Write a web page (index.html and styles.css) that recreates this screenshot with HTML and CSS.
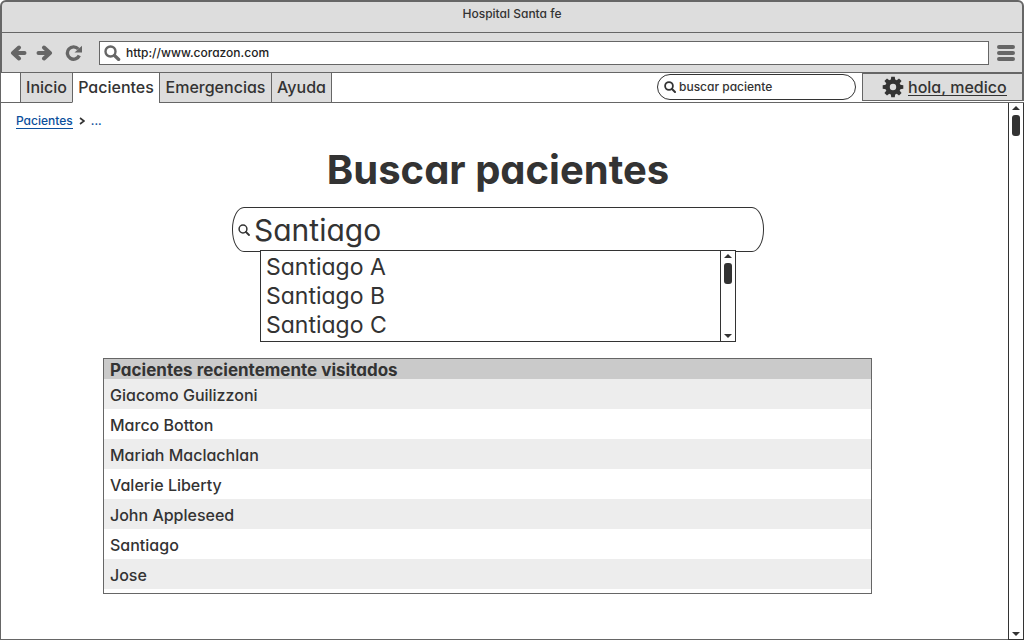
FILE: index.html
```html
<!DOCTYPE html>
<html lang="es">
<head>
<meta charset="utf-8">
<meta name="viewport" content="width=device-width, initial-scale=1">
<title>Hospital Santa fe</title>
<link rel="stylesheet" href="styles.css">
</head>
<body>
<div class="window">
  <header class="chrome">
    <div class="titlebar">Hospital Santa fe</div>
    <div class="toolbar">
      <div class="history">
        <button class="icon-button" type="button" aria-label="Atrás">
          <svg width="18" height="16" viewBox="0 0 18 16"><path d="M9 2.500 3 8l6 5.500M3.500 8H14.500" fill="none" stroke="currentColor" stroke-width="4" stroke-linecap="round" stroke-linejoin="round"/></svg>
        </button>
        <button class="icon-button" type="button" aria-label="Adelante">
          <svg width="18" height="16" viewBox="0 0 18 16"><path d="M9 2.500 15 8l-6 5.500M14.500 8H3.500" fill="none" stroke="currentColor" stroke-width="4" stroke-linecap="round" stroke-linejoin="round"/></svg>
        </button>
        <button class="icon-button reload" type="button" aria-label="Recargar">
          <svg width="18" height="16" viewBox="0 0 18 16"><path d="M13.300 4A6.200 6.200 0 1 0 14.300 10.500" fill="none" stroke="currentColor" stroke-width="3.400"/><path d="M17 .8V7.500H9.500z" fill="currentColor"/></svg>
        </button>
      </div>
      <label class="address">
        <svg width="18" height="16" viewBox="0 0 18 16"><circle cx="6.500" cy="6.500" r="5" fill="none" stroke="currentColor" stroke-width="2.400"/><path d="m10.500 10.500 4.200 4" stroke="currentColor" stroke-width="3.200" stroke-linecap="round"/></svg>
        <input type="text" value="http://www.corazon.com" aria-label="Dirección">
      </label>
      <button class="icon-button" type="button" aria-label="Menú">
        <svg width="18" height="16" viewBox="0 0 18 16"><path d="M2 2h14M2 8h14M2 14h14" stroke="currentColor" stroke-width="4" stroke-linecap="round"/></svg>
      </button>
    </div>
  </header>

  <div class="navbar">
    <nav class="tabs">
      <a class="tab" href="#inicio">Inicio</a>
      <a class="tab tab-active" href="#pacientes" aria-current="page">Pacientes</a>
      <a class="tab" href="#emergencias">Emergencias</a>
      <a class="tab" href="#ayuda">Ayuda</a>
    </nav>
    <label class="quick-search">
      <svg width="12" height="12" viewBox="0 0 12 12"><circle cx="5" cy="5" r="3.900" fill="none" stroke="currentColor" stroke-width="1.800"/><path d="m8 8 3 3" stroke="currentColor" stroke-width="2" stroke-linecap="round"/></svg>
      <input type="text" value="buscar paciente" aria-label="Buscar paciente">
    </label>
    <div class="account">
      <svg width="22" height="22" viewBox="-11 -11 22 22"><g fill="currentColor"><path fill-rule="evenodd" d="M0-7.700A7.700 7.700 0 1 0 0 7.700 7.700 7.700 0 1 0 0-7.700M0-3.200A3.200 3.200 0 1 1 0 3.200 3.200 3.200 0 1 1 0-3.200"/><path id="tooth" d="M-2.200-7-1.800-10.300H1.800L2.200-7z"/><use href="#tooth" transform="rotate(45)"/><use href="#tooth" transform="rotate(90)"/><use href="#tooth" transform="rotate(135)"/><use href="#tooth" transform="rotate(180)"/><use href="#tooth" transform="rotate(225)"/><use href="#tooth" transform="rotate(270)"/><use href="#tooth" transform="rotate(315)"/></g></svg>
      <a href="#cuenta">hola, medico</a>
    </div>
  </div>

  <div class="viewport">
    <main class="page">
      <nav class="breadcrumb" aria-label="Ruta">
        <a href="#pacientes">Pacientes</a>
        <svg width="6" height="8" viewBox="0 0 6 8"><path d="m1 1 4 3-4 3" fill="none" stroke="currentColor" stroke-width="1.600"/></svg>
        <span class="crumb-rest">...</span>
      </nav>
      <div class="content">
        <h1>Buscar pacientes</h1>
        <div class="finder">
          <label class="finder-box">
            <svg width="12" height="12" viewBox="0 0 12 12"><circle cx="5" cy="5" r="3.900" fill="none" stroke="currentColor" stroke-width="1.500"/><path d="m8 8 3 3" stroke="currentColor" stroke-width="1.800" stroke-linecap="round"/></svg>
            <input type="text" value="Santiago" aria-label="Nombre del paciente">
          </label>
          <div class="suggestions">
            <ul>
              <li><button type="button">Santiago A</button></li>
              <li><button type="button">Santiago B</button></li>
              <li><button type="button">Santiago C</button></li>
            </ul>
            <div class="scrollbar">
              <button class="arrow" type="button" aria-label="Subir lista"><svg width="8" height="4" viewBox="0 0 8 4"><path d="M0 4 4 0l4 4z" fill="currentColor"/></svg></button>
              <div class="thumb"></div>
              <button class="arrow arrow-down" type="button" aria-label="Bajar lista"><svg width="8" height="4" viewBox="0 0 8 4"><path d="M0 0h8L4 4z" fill="currentColor"/></svg></button>
            </div>
          </div>
        </div>
        <table class="recent">
          <thead><tr><th scope="col">Pacientes recientemente visitados</th></tr></thead>
          <tbody>
            <tr><td>Giacomo Guilizzoni</td></tr>
            <tr><td>Marco Botton</td></tr>
            <tr><td>Mariah Maclachlan</td></tr>
            <tr><td>Valerie Liberty</td></tr>
            <tr><td>John Appleseed</td></tr>
            <tr><td>Santiago</td></tr>
            <tr><td>Jose</td></tr>
          </tbody>
        </table>
      </div>
    </main>
    <div class="scrollbar">
      <button class="arrow" type="button" aria-label="Subir"><svg width="8" height="4" viewBox="0 0 8 4"><path d="M0 4 4 0l4 4z" fill="currentColor"/></svg></button>
      <div class="thumb"></div>
      <button class="arrow arrow-down" type="button" aria-label="Bajar"><svg width="8" height="4" viewBox="0 0 8 4"><path d="M0 0h8L4 4z" fill="currentColor"/></svg></button>
    </div>
  </div>
</div>
</body>
</html>
```
FILE: styles.css
```css
:root {
  --ink: #333;
  --line: #666;
  --panel: #ddd;
  --link: #0b4f9c;
}

* { box-sizing: border-box; }

body {
  margin: 0;
  background: #fff;
  color: var(--ink);
  font: 500 16px/20px Inter, "Noto Sans", sans-serif;
  font-feature-settings: "cv11";
}

button, input {
  margin: 0;
  padding: 0;
  border: 0;
  background: none;
  color: inherit;
  font: inherit;
  font-feature-settings: inherit;
  outline: 0;
}

button { cursor: pointer; }
input { flex: 1; min-width: 0; }
svg { display: block; flex: none; }

.window {
  display: flex;
  flex-direction: column;
  min-height: 100vh;
}

.chrome {
  border: 2px solid var(--line);
  border-bottom-width: 1px;
  border-radius: 6px 6px 0 0;
  background: var(--panel);
}

.titlebar {
  height: 31px;
  padding-top: 2px;
  border-bottom: 1px solid var(--line);
  font-size: 12px;
  text-align: center;
}

.toolbar {
  display: flex;
  align-items: center;
  gap: 8px;
  height: 39px;
  padding: 0 7px 0 8px;
}

.icon-button { color: var(--line); }

.history {
  display: flex;
  gap: 7px;
  margin-right: 8px;
}

.reload { margin-left: 5px; }

.address {
  flex: 1;
  display: flex;
  align-items: center;
  gap: 4px;
  height: 24px;
  padding: 0 4px;
  border: 1px solid var(--line);
  background: #fff;
  color: var(--line);
}

.address input {
  color: #222;
  font-size: 12px;
}

.navbar {
  display: flex;
  height: 30px;
  padding-left: 19px;
  border-left: 1px solid var(--line);
  box-shadow: inset 0 -1px var(--line);
}

.tabs {
  display: grid;
  grid-template-columns: 52px 87px 112px 61px;
  margin-right: auto;
}

.tab {
  border: solid var(--line);
  border-width: 0 0 1px 1px;
  background: var(--panel);
  color: inherit;
  font-size: 16px;
  line-height: 29px;
  text-align: center;
  text-decoration: none;
}

.tab:last-child { border-right-width: 1px; }

.tab-active {
  border-bottom-color: #fff;
  background: #fff;
}

.quick-search {
  display: flex;
  align-items: center;
  gap: 3px;
  width: 199px;
  height: 26px;
  margin: 1px 6px 0 0;
  padding: 0 6px;
  border: 1px solid var(--ink);
  border-radius: 13px;
  background: #fff;
}

.quick-search input { font-size: 12px; }

.account {
  display: flex;
  align-items: center;
  gap: 4px;
  width: 162px;
  height: 28px;
  padding-left: 19px;
  border: solid var(--line);
  border-width: 1px 2px 1px 1px;
  background: var(--panel);
}

.account a {
  border-bottom: 1px solid var(--ink);
  color: inherit;
  font-size: 16px;
  line-height: 16px;
  text-decoration: none;
}

.viewport {
  flex: 1;
  display: flex;
}

.page {
  flex: 1;
  border: solid var(--line);
  border-width: 0 0 1px 1px;
}

.breadcrumb {
  display: flex;
  align-items: center;
  gap: 6px;
  padding: 8px 0 0 15px;
  font-size: 12px;
}

.breadcrumb a {
  border-bottom: 1px solid var(--link);
  color: var(--link);
  line-height: 15px;
  text-decoration: none;
}

.crumb-rest { color: var(--link); }

.content { padding: 15px 115px 0 102px; }

h1 {
  margin: 0;
  font-size: 40px;
  font-weight: 700;
  line-height: 48px;
  text-align: center;
}

.finder {
  position: relative;
  width: 100%;
  max-width: 532px;
  margin: 13px auto 0;
}

.finder-box {
  display: flex;
  align-items: center;
  gap: 4px;
  height: 45px;
  padding: 0 5px;
  border: 1px solid var(--ink);
  border-radius: 12px / 22px;
}

.finder-box input {
  font-size: 30px;
  font-weight: 400;
  line-height: 40px;
}

.suggestions {
  position: absolute;
  top: 43px;
  left: 28px;
  right: 28px;
  display: flex;
  border: 1px solid var(--ink);
  background: #fff;
}

.suggestions ul {
  flex: 1;
  margin: 0;
  padding: 2px 0 1px 5px;
  list-style: none;
}

.suggestions li button {
  display: block;
  font-size: 23px;
  font-weight: 400;
  line-height: 29px;
}

.scrollbar {
  display: flex;
  flex-direction: column;
  align-items: center;
  width: 16px;
  padding: 3px 0;
  border: 1px solid var(--ink);
}

.viewport > .scrollbar { border-top: 0; }

.suggestions .scrollbar {
  width: 15px;
  border-width: 0 0 0 1px;
}

.thumb {
  width: 8px;
  height: 21px;
  margin-top: 5px;
  border-radius: 3px;
  background: var(--ink);
}

.arrow-down { margin-top: auto; }

.recent {
  width: calc(100% - 21px);
  margin: 106px 0 20px;
  padding-bottom: 4px;
  border: 1px solid var(--line);
  border-spacing: 0;
}

.recent th, .recent td {
  height: 30px;
  padding: 2px 6px 0;
  text-align: left;
}

.recent th {
  height: 20px;
  background: #cacaca;
  font-size: 17px;
  font-weight: 700;
  line-height: 18px;
}

.recent tbody tr:nth-child(odd) { background: #ededed; }
```
